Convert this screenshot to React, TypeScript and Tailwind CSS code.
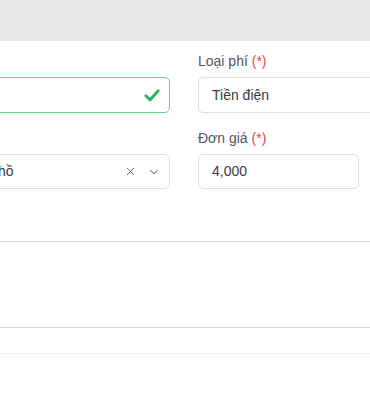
import { X, ChevronDown } from 'lucide-react'

const font = { fontFamily: '"Liberation Sans", Arial, sans-serif' }

function Label({ text }: { text: string }) {
  return (
    <div className="h-5 text-[14px] leading-5 text-[#55555f] mb-[6px]">
      {text} <span className="text-[#ef4444]">(*)</span>
    </div>
  )
}

export default function App() {
  return (
    <div className="w-[370px] h-[418px] bg-white overflow-hidden" style={font}>
      <div className="h-[41px] bg-[#e9e9eb]" />

      <div className="flex gap-[28px] -ml-[40px] pt-[10px]">
        <div className="w-[210px] shrink-0 flex flex-col">
          <div className="h-5 mb-[6px]" />
          <div className="h-[36px] rounded-[5px] border border-[#66d68f] flex items-center justify-end pr-[9px]">
            <svg width="16" height="13" viewBox="0 0 16 13" fill="none">
              <path d="M1.8 6.8 6 11 14.2 1.8" stroke="#22b55e" strokeWidth="2.8" strokeLinecap="round" strokeLinejoin="round" />
            </svg>
          </div>
          <div className="h-[15px]" />
          <div className="h-5 mb-[6px]" />
          <div className="h-[35px] rounded-[5px] border border-[#dcdce3] flex items-center pl-[10px] pr-[8px] text-[14px] text-[#3a3a44]">
            <span className="flex-1">Giờ hồ</span>
            <X className="w-[13px] h-[13px] text-[#6b6b75] mr-[10px]" strokeWidth={1.75} />
            <ChevronDown className="w-[14px] h-[14px] text-[#6b6b75]" strokeWidth={1.75} />
          </div>
        </div>

        <div className="w-[200px] shrink-0 flex flex-col">
          <Label text="Loại phí" />
          <div className="h-[36px] rounded-[5px] border border-[#dcdce3] flex items-center px-[13px] text-[14px] text-[#3a3a44]">
            Tiền điện
          </div>
          <div className="h-[15px]" />
          <Label text="Đơn giá" />
          <div className="w-[161px] h-[35px] rounded-[5px] border border-[#dcdce3] flex items-center px-[13px] text-[14px] text-[#3a3a44]">
            4,000
          </div>
        </div>
      </div>

      <div className="mt-[52px] border-t border-[#d6d5de]" />
      <div className="h-[85px]" />
      <div className="border-t border-[#d6d5de]" />
      <div className="h-[25px]" />
      <div className="border-t border-[#f0f0f3]" />
    </div>
  )
}
